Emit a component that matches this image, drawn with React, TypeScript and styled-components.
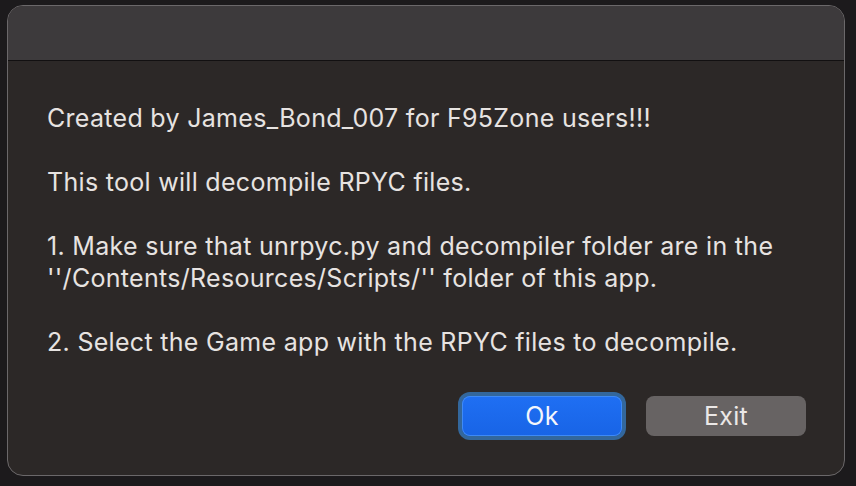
import React from "react";
import styled, { createGlobalStyle } from "styled-components";

const Global = createGlobalStyle`
  html, body { margin: 0; padding: 0; background: #1c1a1c; }
  body { font-family: Inter, "Noto Sans", "Liberation Sans", sans-serif; }
`;

const Page = styled.div`
  width: 856px;
  height: 486px;
  box-sizing: border-box;
  padding: 5px 11px 10px 7px;
  background: #1c1a1c;
  display: flex;
`;

const Window = styled.div`
  width: 838px;
  height: 471px;
  box-sizing: border-box;
  border: 1px solid #6b686a;
  border-radius: 16px;
  overflow: hidden;
  background: #2c2827;
  display: flex;
  flex-direction: column;
`;

const TitleBar = styled.div`
  height: 54px;
  flex: none;
  background: #3d3a3c;
  border-bottom: 1px solid #121011;
`;

const Body = styled.div`
  flex: 1;
  display: flex;
  flex-direction: column;
  padding: 41px 38px 0 39px;
`;

const Message = styled.div`
  color: #e7e3e1;
  font-size: 25px;
  line-height: 32px;
  letter-spacing: 0.3px;
`;

const Para = styled.p`
  margin: 0 0 32px 0;
  white-space: nowrap;
  &:last-child { margin-bottom: 0; }
`;

const ButtonRow = styled.div`
  display: flex;
  justify-content: flex-end;
  gap: 24px;
  margin-top: 38px;
`;

const Button = styled.button<{ $primary?: boolean }>`
  width: 160px;
  height: 40px;
  border-radius: 8px;
  border: none;
  font-family: inherit;
  font-size: 25px;
  letter-spacing: 0.3px;
  padding: 0;
  color: ${(p) => (p.$primary ? "#f4f6fb" : "#ebe8e7")};
  background: ${(p) =>
    p.$primary ? "linear-gradient(#1f6ff3, #1864e6)" : "#676363"};
  box-shadow: ${(p) =>
    p.$primary
      ? "inset 0 0 0 1px #3e8af7, 0 0 0 4px #33679c"
      : "none"};
`;

export default function App() {
  return (
    <>
      <Global />
      <Page>
        <Window>
          <TitleBar />
          <Body>
            <Message>
              <Para>Created by James_Bond_007 for F95Zone users!!!</Para>
              <Para>This tool will decompile RPYC files.</Para>
              <Para>
                1. Make sure that unrpyc.py and decompiler folder are in the
                <br />
                ''/Contents/Resources/Scripts/'' folder of this app.
              </Para>
              <Para>2. Select the Game app with the RPYC files to decompile.</Para>
            </Message>
            <ButtonRow>
              <Button $primary>Ok</Button>
              <Button>Exit</Button>
            </ButtonRow>
          </Body>
        </Window>
      </Page>
    </>
  );
}
